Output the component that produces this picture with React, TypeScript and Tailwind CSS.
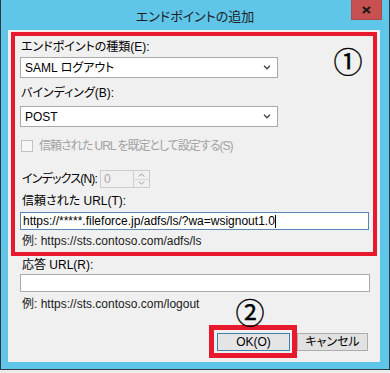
import React from "react";

const F =
  "font-['Liberation_Sans','Noto_Sans_CJK_JP',sans-serif] [font-feature-settings:'palt']";

function Chevron() {
  return (
    <svg width="8" height="5" viewBox="0 0 8 5" className="block">
      <polyline points="1,0.8 4,3.8 7,0.8" fill="none" stroke="#404040" strokeWidth="1.3" />
    </svg>
  );
}

function Select({ value }: { value: string }) {
  return (
    <div className="ml-[5px] w-[258px] h-[21px] border border-[#a9a9a9] bg-white flex items-center justify-between pl-[4px] pr-[6px]">
      <span className="text-[12px] leading-[16px] text-black">{value}</span>
      <Chevron />
    </div>
  );
}

export default function App() {
  return (
    <div className={`relative w-[390px] h-[373px] bg-[#ececec] overflow-hidden ${F}`}>
      <div className="h-[370px] bg-[#5fc5e9] border-l border-r border-b border-[#2e3a40] flex flex-col">
        {/* title bar */}
        <div className="relative h-[30px] flex items-center justify-center pt-[4px]">
          <span className="text-[13px] text-[#1e1e1e]">エンドポイントの追加</span>
          <div className="absolute top-0 left-[350px] w-[31px] h-[20px] bg-[#c75050] border border-[#b04848] border-t-0 flex items-center justify-center">
            <svg width="9" height="8" viewBox="0 0 9 8">
              <path d="M1 1 L8 7 M8 1 L1 7" stroke="#1b1b1b" strokeWidth="2.2" />
            </svg>
          </div>
        </div>
        {/* client */}
        <div className="ml-[7px] mr-[9px] h-[332px] bg-[#f0f0f0] flex flex-col">
          {/* red box 1 */}
          <div className="ml-[3px] mt-[2px] w-[366px] h-[224px] border-[4px] border-[#e8192c] flex flex-col">
            <div className="mt-[3px] pl-[6px] h-[16px] text-[12px] leading-[16px] text-black">
              エンドポイントの種類(E):
            </div>
            <div className="mt-[2px]">
              <Select value="SAML ログアウト" />
            </div>
            <div className="mt-[7px] pl-[6px] h-[16px] text-[12px] leading-[16px] text-black">
              バインディング(B):
            </div>
            <div className="mt-[5px]">
              <Select value="POST" />
            </div>
            <div className="mt-[11px] pl-[6px] h-[16px] flex items-center gap-[6px]">
              <div className="w-[12px] h-[12px] border border-[#c3c3c3] bg-[#f7f7f7]" />
              <span className="text-[12px] leading-[16px] text-[#a2a2a2] tracking-[-1px] whitespace-nowrap">
                信頼された URL を既定として設定する(S)
              </span>
            </div>
            <div className="mt-[16px] pl-[7px] h-[18px] flex items-center gap-[3px]">
              <span className="text-[12px] leading-[16px] text-black whitespace-nowrap tracking-[-0.8px]">
                インデックス(N):
              </span>
              <div className="w-[50px] h-[18px] border border-[#cccccc] bg-[#f0f0f0] flex">
                <div className="flex-1 pl-[3px] text-[12px] leading-[16px] text-[#a8a8a8]">0</div>
                <div className="w-[16px] border-l border-[#d0d0d0] flex flex-col">
                  <div className="flex-1 flex items-center justify-center border-b border-[#d9d9d9]">
                    <svg width="7" height="4" viewBox="0 0 7 4">
                      <polyline points="0.8,3.5 3.5,0.8 6.2,3.5" fill="none" stroke="#9a9a9a" strokeWidth="1" />
                    </svg>
                  </div>
                  <div className="flex-1 flex items-center justify-center">
                    <svg width="7" height="4" viewBox="0 0 7 4">
                      <polyline points="0.8,0.5 3.5,3.2 6.2,0.5" fill="none" stroke="#9a9a9a" strokeWidth="1" />
                    </svg>
                  </div>
                </div>
              </div>
            </div>
            <div className="mt-[5px] pl-[7px] h-[16px] text-[12px] leading-[16px] text-black">
              信頼された URL(T):
            </div>
            <div className="mt-[3px] ml-[5px] w-[349px] h-[18px] border border-[#5a86b5] bg-white flex items-center pl-[2px]">
              <span className="text-[12px] leading-[16px] text-black">
                https://*****.fileforce.jp/adfs/ls/?wa=wsignout1.0
              </span>
              <span className="w-px h-[13px] bg-black" />
            </div>
            <div className="mt-[3px] pl-[7px] h-[16px] text-[12px] leading-[16px] text-[#1a1a1a]">
              例: https://sts.contoso.com/adfs/ls
            </div>
          </div>
          {/* reply url */}
          <div className="mt-[1px] pl-[14px] h-[16px] text-[12px] leading-[16px] text-black">
            応答 URL(R):
          </div>
          <div className="mt-[1px] ml-[12px] w-[350px] h-[18px] border border-[#ababab] bg-white" />
          <div className="mt-[4px] pl-[14px] h-[16px] text-[12px] leading-[16px] text-[#1a1a1a]">
            例: https://sts.contoso.com/logout
          </div>
          {/* buttons */}
          <div className="mt-[13px] mr-[12px] flex justify-end items-start">
            <div className="border-[5px] border-[#e8192c] pl-[3px] pr-[2px] pt-[3px] pb-[2px]">
              <div className="w-[73px] h-[18px] border border-[#3c7fb1] bg-[#e5e5e5] flex items-center justify-center text-[12px] leading-[16px] text-black">
                OK(O)
              </div>
            </div>
            <div className="mt-[8px] w-[71px] h-[18px] border border-[#acacac] bg-[#e1e1e1] flex items-center justify-center text-[12px] leading-[16px] text-black">
              キャンセル
            </div>
          </div>
        </div>
      </div>
      {/* annotations */}
      <div className="absolute left-[333px] top-[44px] w-[30px] h-[32px] flex items-center justify-center text-[29px] leading-[32px] text-black [-webkit-text-stroke:0.35px_black] font-['Noto_Sans_CJK_JP',sans-serif]">
        ①
      </div>
      <div className="absolute left-[235px] top-[295px] w-[30px] h-[32px] flex items-center justify-center text-[29px] leading-[32px] text-black [-webkit-text-stroke:0.35px_black] font-['Noto_Sans_CJK_JP',sans-serif]">
        ②
      </div>
    </div>
  );
}
